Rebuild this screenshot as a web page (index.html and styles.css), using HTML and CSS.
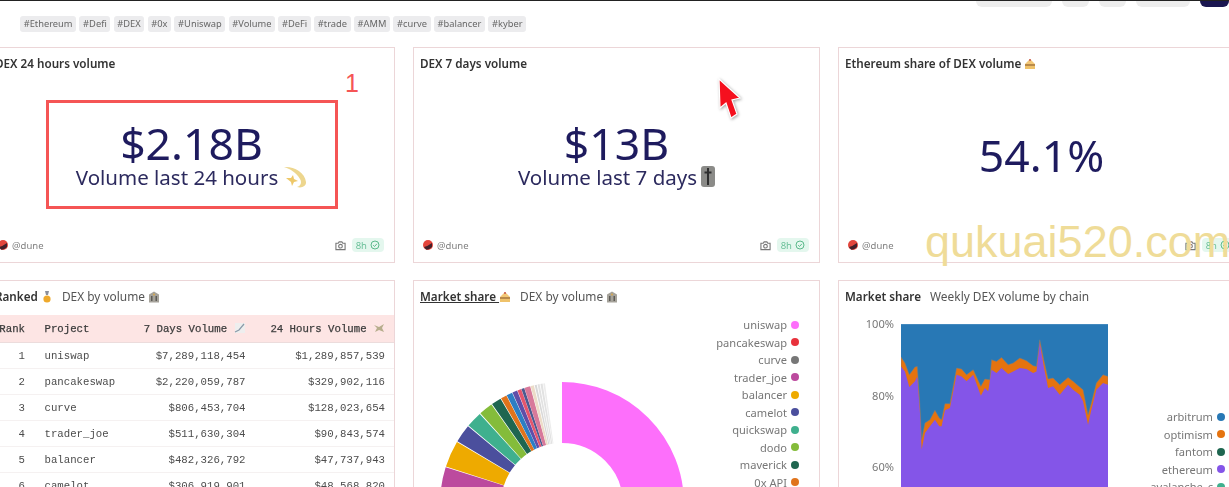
FILE: index.html
```html
<!DOCTYPE html>
<html lang="en">
<head>
    <meta charset="UTF-8">
    <meta name="viewport" content="width=device-width, initial-scale=1.0">
    <title>DEX metrics</title>
    <link rel="stylesheet" href="styles.css">
</head>
<body>
    <svg class="defs" width="0" height="0">
        <symbol id="cake" viewBox="0 0 12 12">
            <path d="M6 1 L11 6 H1 Z" fill="#f3c877"/>
            <rect x="1" y="6" width="10" height="2" fill="#b98a4a"/>
            <rect x="1" y="8" width="10" height="3" fill="#efc26a"/>
            <circle cx="6" cy="2" r="1" fill="#c9564a"/>
        </symbol>
        <symbol id="bank" viewBox="0 0 12 12">
            <path d="M6 0.5 L11 3.5 V11.5 H1 V3.5 Z" fill="#a5a29a"/>
            <rect x="3" y="5" width="1.5" height="5" fill="#5d5a55"/>
            <rect x="7.5" y="5" width="1.5" height="5" fill="#5d5a55"/>
            <circle cx="6" cy="3.6" r="1" fill="#d8a84c"/>
        </symbol>
        <symbol id="avatar" viewBox="0 0 10 10">
            <circle cx="5" cy="5" r="5" fill="#e4453c"/>
            <path d="M1 7 Q5 6 9 3 V7 Q6 10 3 9.6 Z" fill="#43202a"/>
        </symbol>
        <symbol id="camera" viewBox="0 0 12 12">
            <path d="M1 3.5 H3.5 L4.5 2 H7.5 L8.5 3.5 H11 V10.5 H1 Z" fill="none" stroke="#777" stroke-width="1.2"/>
            <circle cx="6" cy="6.8" r="2" fill="none" stroke="#777" stroke-width="1.2"/>
        </symbol>
        <symbol id="check" viewBox="0 0 12 12">
            <circle cx="6" cy="6" r="4.8" fill="none" stroke="#5cba8c" stroke-width="1.2"/>
            <path d="M3.8 6.2 L5.4 7.8 L8.3 4.6" fill="none" stroke="#5cba8c" stroke-width="1.2"/>
        </symbol>
    </svg>

    <div class="topbar">
        <span class="top-btn top-btn-wide"></span>
        <span class="top-btn top-btn-small"></span>
        <span class="top-btn top-btn-small"></span>
        <span class="top-btn top-btn-mid"></span>
        <span class="top-btn top-btn-dark"></span>
    </div>

    <div class="tags">
        <span class="tag">#Ethereum</span>
        <span class="tag">#Defi</span>
        <span class="tag">#DEX</span>
        <span class="tag">#0x</span>
        <span class="tag">#Uniswap</span>
        <span class="tag">#Volume</span>
        <span class="tag">#DeFi</span>
        <span class="tag">#trade</span>
        <span class="tag">#AMM</span>
        <span class="tag">#curve</span>
        <span class="tag">#balancer</span>
        <span class="tag">#kyber</span>
    </div>

    <div class="dashboard">
        <div class="card stat-card">
            <div class="card-title"><b>DEX 24 hours volume</b></div>
            <div class="stat-body">
                <div class="stat-value">$2.18B</div>
                <div class="stat-label">Volume last 24 hours
                    <svg class="stat-emoji" viewBox="0 0 24 22">
                        <path d="M1 1 C10 0 22 6 23 16 C23.5 20 19 22.5 14 21 C18 20 19 16 17 13 C13 6 7 3 1 1 Z" fill="#edd68e"/>
                        <path d="M3 12 L8 12 L10 9 L11 13 L15 15 L11 16 L9 20 L8 16 Z" fill="#eec869"/>
                    </svg>
                </div>
            </div>
            <div class="card-footer">
                <svg class="avatar"><use href="#avatar"/></svg>
                <span class="owner">@dune</span>
                <svg class="camera"><use href="#camera"/></svg>
                <span class="badge">8h <svg class="check"><use href="#check"/></svg></span>
            </div>
        </div>

        <div class="card stat-card">
            <div class="card-title"><b>DEX 7 days volume</b></div>
            <div class="stat-body">
                <div class="stat-value">$13B</div>
                <div class="stat-label">Volume last 7 days<svg class="stat-emoji tomb" viewBox="0 0 14 21">
                        <rect width="14" height="21" rx="3" fill="#8b8b88"/>
                        <path d="M7 2 V19 M3.5 6.5 H10.5" stroke="#2e2e2e" stroke-width="2"/>
                    </svg>
                </div>
            </div>
            <div class="card-footer">
                <svg class="avatar"><use href="#avatar"/></svg>
                <span class="owner">@dune</span>
                <svg class="camera"><use href="#camera"/></svg>
                <span class="badge">8h <svg class="check"><use href="#check"/></svg></span>
            </div>
        </div>

        <div class="card stat-card">
            <div class="card-title"><b>Ethereum share of DEX volume</b> <svg class="emoji"><use href="#cake"/></svg></div>
            <div class="stat-body">
                <div class="stat-value">54.1%</div>
            </div>
            <div class="card-footer">
                <svg class="avatar"><use href="#avatar"/></svg>
                <span class="owner">@dune</span>
                <svg class="camera"><use href="#camera"/></svg>
                <span class="badge">8h <svg class="check"><use href="#check"/></svg></span>
            </div>
        </div>

        <div class="card">
            <div class="card-title">
                <b>Ranked</b>
                <svg class="emoji" viewBox="0 0 12 12">
                    <path d="M4 0 H8 L7 4 H5 Z" fill="#8a8f9c"/>
                    <circle cx="6" cy="8" r="3.6" fill="#eea92c"/>
                </svg>
                <span class="title-sub">DEX by volume</span>
                <svg class="emoji"><use href="#bank"/></svg>
            </div>
            <table class="rank-table">
                <thead>
                    <tr>
                        <th class="col-rank">Rank</th>
                        <th class="col-project">Project</th>
                        <th class="col-seven">7 Days Volume
                            <svg class="emoji" viewBox="0 0 12 12">
                                <rect x="1" y="1" width="10" height="10" fill="#eee"/>
                                <path d="M1 10 L5 8 L10 2" fill="none" stroke="#8a9aa8" stroke-width="1.2"/>
                            </svg>
                        </th>
                        <th class="col-day">24 Hours Volume
                            <svg class="emoji" viewBox="0 0 12 12">
                                <path d="M1 3 L6 5 L11 2 L9 6 L11 10 L6 8 L2 10 L4 6 Z" fill="#b6ad8c"/>
                            </svg>
                        </th>
                    </tr>
                </thead>
                <tbody>
                    <tr><td class="col-rank">1</td><td class="col-project">uniswap</td><td class="num">$7,289,118,454</td><td class="num">$1,289,857,539</td></tr>
                    <tr><td class="col-rank">2</td><td class="col-project">pancakeswap</td><td class="num">$2,220,059,787</td><td class="num">$329,902,116</td></tr>
                    <tr><td class="col-rank">3</td><td class="col-project">curve</td><td class="num">$806,453,704</td><td class="num">$128,023,654</td></tr>
                    <tr><td class="col-rank">4</td><td class="col-project">trader_joe</td><td class="num">$511,630,304</td><td class="num">$90,843,574</td></tr>
                    <tr><td class="col-rank">5</td><td class="col-project">balancer</td><td class="num">$482,326,792</td><td class="num">$47,737,943</td></tr>
                    <tr><td class="col-rank">6</td><td class="col-project">camelot</td><td class="num">$306,919,901</td><td class="num">$48,568,820</td></tr>
                </tbody>
            </table>
        </div>

        <div class="card">
            <div class="card-title">
                <b class="underlined">Market share <svg class="emoji"><use href="#cake"/></svg></b>
                <span class="title-sub">DEX by volume</span>
                <svg class="emoji"><use href="#bank"/></svg>
            </div>
            <div class="chart-row">
                <svg class="pie" viewBox="0 0 244 244">
                    <g transform="rotate(-90 122 122)" fill="none" stroke-width="61">
                        <circle cx="122" cy="122" r="91.5" pathLength="360" stroke="#fd6ffb" stroke-dasharray="150 210"/>
                        <circle cx="122" cy="122" r="91.5" pathLength="360" stroke="#4a4a4a" stroke-dasharray="30 330" stroke-dashoffset="-170"/>
                        <circle cx="122" cy="122" r="91.5" pathLength="360" stroke="#bc4a9e" stroke-dasharray="19.6 340.4" stroke-dashoffset="-268"/>
                        <circle cx="122" cy="122" r="91.5" pathLength="360" stroke="#eeaa00" stroke-dasharray="12.6 347.4" stroke-dashoffset="-288"/>
                        <circle cx="122" cy="122" r="91.5" pathLength="360" stroke="#4b4f9d" stroke-dasharray="8.6 351.4" stroke-dashoffset="-301"/>
                        <circle cx="122" cy="122" r="91.5" pathLength="360" stroke="#3fb08e" stroke-dasharray="7.6 352.4" stroke-dashoffset="-310"/>
                        <circle cx="122" cy="122" r="91.5" pathLength="360" stroke="#84bc3a" stroke-dasharray="6.6 353.4" stroke-dashoffset="-318"/>
                        <circle cx="122" cy="122" r="91.5" pathLength="360" stroke="#1f6650" stroke-dasharray="4.7 355.3" stroke-dashoffset="-325"/>
                        <circle cx="122" cy="122" r="91.5" pathLength="360" stroke="#e0741c" stroke-dasharray="2.8 357.2" stroke-dashoffset="-330"/>
                        <circle cx="122" cy="122" r="91.5" pathLength="360" stroke="#2d7ec4" stroke-dasharray="2.8 357.2" stroke-dashoffset="-333"/>
                        <circle cx="122" cy="122" r="91.5" pathLength="360" stroke="#5f4ea8" stroke-dasharray="2.4 357.6" stroke-dashoffset="-336"/>
                        <circle cx="122" cy="122" r="91.5" pathLength="360" stroke="#e5556d" stroke-dasharray="1.8 358.2" stroke-dashoffset="-338.6"/>
                        <circle cx="122" cy="122" r="91.5" pathLength="360" stroke="#4c5a90" stroke-dasharray="1.4 358.6" stroke-dashoffset="-340.5"/>
                        <circle cx="122" cy="122" r="91.5" pathLength="360" stroke="#d8799a" stroke-dasharray="2.8 357.2" stroke-dashoffset="-342"/>
                        <circle cx="122" cy="122" r="91.5" pathLength="360" stroke="#ecdcc8" stroke-dasharray="1.6 358.4" stroke-dashoffset="-345"/>
                        <circle cx="122" cy="122" r="91.5" pathLength="360" stroke="#d8d8d8" stroke-dasharray="1 359" stroke-dashoffset="-347"/>
                        <circle cx="122" cy="122" r="91.5" pathLength="360" stroke="#e2e2e2" stroke-dasharray="1 359" stroke-dashoffset="-348.4"/>
                        <circle cx="122" cy="122" r="91.5" pathLength="360" stroke="#e2e2e2" stroke-dasharray="1 359" stroke-dashoffset="-349.8"/>
                        <circle cx="122" cy="122" r="91.5" pathLength="360" stroke="#ececec" stroke-dasharray="0.8 359.2" stroke-dashoffset="-351.1"/>
                    </g>
                </svg>
                <ul class="legend">
                    <li>uniswap <i class="dot dot-uniswap"></i></li>
                    <li>pancakeswap <i class="dot dot-pancake"></i></li>
                    <li>curve <i class="dot dot-curve"></i></li>
                    <li>trader_joe <i class="dot dot-joe"></i></li>
                    <li>balancer <i class="dot dot-balancer"></i></li>
                    <li>camelot <i class="dot dot-camelot"></i></li>
                    <li>quickswap <i class="dot dot-quick"></i></li>
                    <li>dodo <i class="dot dot-dodo"></i></li>
                    <li>maverick <i class="dot dot-maverick"></i></li>
                    <li>0x API <i class="dot dot-zerox"></i></li>
                </ul>
            </div>
        </div>

        <div class="card">
            <div class="card-title"><b>Market share</b> <span class="title-sub">Weekly DEX volume by chain</span></div>
            <div class="area-row">
                <div class="y-axis">
                    <span>100%</span>
                    <span>80%</span>
                    <span>60%</span>
                </div>
                <svg class="area" viewBox="243 133 622 495">
                    <rect x="243" y="133" width="622" height="495" fill="#2878b5"/>
                    <polygon fill="#e5730f" stroke="#6f7f8c" stroke-width="1.5" points="243,232 255,250 268,285 285,262 292,260 300,380 305,480 315,430 330,420 345,392 358,415 365,420 375,372 390,372 410,265 425,268 440,285 460,270 483,320 495,298 510,300 515,240 530,245 545,233 565,255 580,250 600,235 620,243 640,258 650,260 660,180 672,240 685,298 700,295 720,315 745,293 760,305 780,322 790,330 805,405 815,370 830,310 850,285 865,290 865,628 243,628"/>
                    <polygon fill="#8455e8" points="243,260 255,275 268,322 285,305 292,290 300,400 305,510 315,460 330,440 345,420 358,440 365,440 375,392 390,385 410,285 425,290 440,305 460,285 483,348 495,325 505,335 515,270 530,280 545,265 565,283 580,275 600,265 620,268 640,280 650,275 660,190 672,260 685,325 700,320 720,345 745,315 760,330 780,345 790,365 805,435 815,390 830,330 850,310 865,315 865,628 243,628"/>
                </svg>
                <ul class="legend legend-chain">
                    <li>arbitrum <i class="dot dot-arbitrum"></i></li>
                    <li>optimism <i class="dot dot-optimism"></i></li>
                    <li>fantom <i class="dot dot-maverick"></i></li>
                    <li>ethereum <i class="dot dot-ethereum"></i></li>
                    <li>avalanche_c <i class="dot dot-quick"></i></li>
                </ul>
            </div>
        </div>
    </div>

    <!-- video annotations on top of the page -->
    <div class="callout"></div>
    <div class="callout-number">1</div>
    <svg class="cursor" viewBox="0 0 34 50">
        <path d="M5 5 L26 24 L18 26 L23 40 L17 44 L12 29 L6 34 Z" fill="#f5101e" stroke="#fff" stroke-width="1.2"/>
    </svg>
    <div class="watermark">qukuai520.com</div>
</body>
</html>
```

FILE: styles.css
```css
html, body {
    height: 487px;
    overflow: hidden;
}

body {
    margin: 0;
    background-color: #fff;
    font-family: "Noto Sans", Arial, sans-serif;
    color: #444;
    position: relative;
}

.defs {
    display: block;
    height: 0;
}

.topbar {
    display: flex;
    justify-content: flex-end;
    gap: 10px;
    height: 6px;
    border-top: 1px solid #222;
}

.top-btn {
    height: 6px;
    background-color: #ededed;
    border-radius: 0 0 6px 6px;
}

.top-btn-wide { width: 76px; }
.top-btn-small { width: 27px; }
.top-btn-mid { width: 54px; }

.top-btn-dark {
    width: 29px;
    background-color: #1a1650;
}

.tags {
    display: flex;
    gap: 3.2px;
    margin: 9px 0 0 20px;
    height: 31px;
    filter: blur(0.35px);
}

.tag {
    height: 16px;
    line-height: 16px;
    padding: 0 3.7px;
    font-size: 9.3px;
    color: #666;
    background-color: #ececee;
    border-radius: 3px;
}

.dashboard {
    display: grid;
    grid-template-columns: repeat(3, 407px);
    grid-template-rows: 216px 300px;
    gap: 17px 18px;
    margin-left: -12px;
    filter: blur(0.35px);
}

.card {
    border: 1px solid #ecd6d8;
    overflow: hidden;
    box-sizing: border-box;
}

.stat-card {
    display: flex;
    flex-direction: column;
}

.card-title {
    height: 16px;
    line-height: 16px;
    padding: 7px 6px 1px;
    font-size: 11.7px;
    color: #555;
    white-space: nowrap;
}

.card-title b {
    font-weight: 600;
    color: #333;
}

.underlined {
    text-decoration: underline;
}

.title-sub {
    margin-left: 6px;
    font-size: 11.9px;
}

.emoji {
    width: 12px;
    height: 12px;
    vertical-align: -2px;
}

.stat-body {
    flex: 1;
    display: flex;
    flex-direction: column;
    align-items: center;
    justify-content: center;
    color: #1e1b5e;
}

.stat-value {
    font-size: 44.5px;
    line-height: 50px;
}

.stat-label {
    font-size: 20.5px;
    line-height: 24px;
    color: #2c2a5e;
    margin: -3px 0 4px;
    display: flex;
    align-items: center;
    gap: 5px;
}

.stat-emoji {
    width: 24px;
    height: 22px;
}

.stat-emoji.tomb {
    width: 14px;
    height: 21px;
    margin-left: -1px;
}

.card-footer {
    display: flex;
    align-items: center;
    gap: 4px;
    height: 14px;
    padding: 0 10px 10px 9px;
    font-size: 9.5px;
    color: #808080;
}

.avatar {
    width: 10px;
    height: 10px;
}

.owner {
    flex: 1;
}

.camera {
    width: 11px;
    height: 11px;
    margin-right: 2px;
}

.badge {
    display: flex;
    align-items: center;
    gap: 3px;
    height: 14px;
    padding: 0 4px;
    color: #6cc09a;
    background-color: #e4f7ee;
    border-radius: 4px;
}

.check {
    width: 10px;
    height: 10px;
}

.rank-table {
    width: 405px;
    margin-top: 10px;
    table-layout: fixed;
    border-collapse: collapse;
    font-family: "Liberation Mono", monospace;
    font-size: 10.7px;
    color: #4c4c4c;
}

.rank-table th {
    height: 27px;
    padding: 0 9px;
    background-color: #fde5e4;
    text-align: left;
    font-weight: 400;
    color: #3c3c3c;
    -webkit-text-stroke: 0.25px #3c3c3c;
    border-bottom: 1px solid #ecdcdc;
}

.rank-table td {
    height: 25px;
    padding: 0 9px;
    border-bottom: 1px solid #f5f1f1;
}

.rank-table .col-rank {
    width: 27px;
    text-align: right;
}

.rank-table .col-project {
    width: 87px;
    padding-left: 10.5px;
}

.rank-table .col-seven {
    width: 105px;
    padding-left: 0;
    text-align: right;
    white-space: nowrap;
}

.rank-table .col-day {
    text-align: right;
    white-space: nowrap;
}

.rank-table .num {
    text-align: right;
}

.chart-row {
    display: flex;
    justify-content: space-between;
    padding: 0 20px 0 26px;
}

.pie {
    width: 244px;
    height: 244px;
    margin-top: 77px;
}

.legend {
    list-style: none;
    margin: 11px 0 0;
    padding: 0;
    display: flex;
    flex-direction: column;
    align-items: flex-end;
    font-size: 11.1px;
    line-height: 17.5px;
    color: #777;
    white-space: nowrap;
}

.legend li {
    display: flex;
    align-items: center;
    gap: 4px;
}

.dot {
    width: 8px;
    height: 8px;
    border-radius: 50%;
}

.dot-uniswap { background-color: #fd6ffb; }
.dot-pancake { background-color: #e8323c; }
.dot-curve { background-color: #777; }
.dot-joe { background-color: #bc4a9e; }
.dot-balancer { background-color: #eeaa00; }
.dot-camelot { background-color: #4b4f9d; }
.dot-quick { background-color: #3fb08e; }
.dot-dodo { background-color: #84bc3a; }
.dot-maverick { background-color: #1f6650; }
.dot-zerox { background-color: #e0741c; }
.dot-arbitrum { background-color: #2878b5; }
.dot-optimism { background-color: #e5730f; }
.dot-ethereum { background-color: #8455e8; }

.area-row {
    display: flex;
    padding-top: 19px;
}

.y-axis {
    width: 55px;
    display: flex;
    flex-direction: column;
    align-items: flex-end;
    gap: 54.5px;
    font-size: 11.1px;
    line-height: 17px;
    color: #777;
    margin-top: -9px;
}

.area {
    width: 207px;
    height: 165px;
    margin-left: 7px;
    flex-shrink: 0;
}

.legend-chain {
    margin: 84px 0 0 2px;
    width: 115px;
}

.callout {
    position: absolute;
    left: 46px;
    top: 100px;
    width: 286px;
    height: 103px;
    border: 3px solid #f55555;
}

.callout-number {
    position: absolute;
    left: 345px;
    top: 69px;
    font-family: "Liberation Sans", Arial, sans-serif;
    font-size: 25px;
    font-weight: 400;
    color: #f55555;
}

.cursor {
    position: absolute;
    left: 714px;
    top: 74px;
    width: 34px;
    height: 50px;
    filter: drop-shadow(1px 1px 1.5px rgba(0, 0, 0, 0.35));
}

.watermark {
    position: absolute;
    left: 925px;
    top: 214px;
    font-family: "Liberation Sans", Arial, sans-serif;
    font-size: 45px;
    line-height: 56px;
    color: #efdc98;
    white-space: nowrap;
}
```
